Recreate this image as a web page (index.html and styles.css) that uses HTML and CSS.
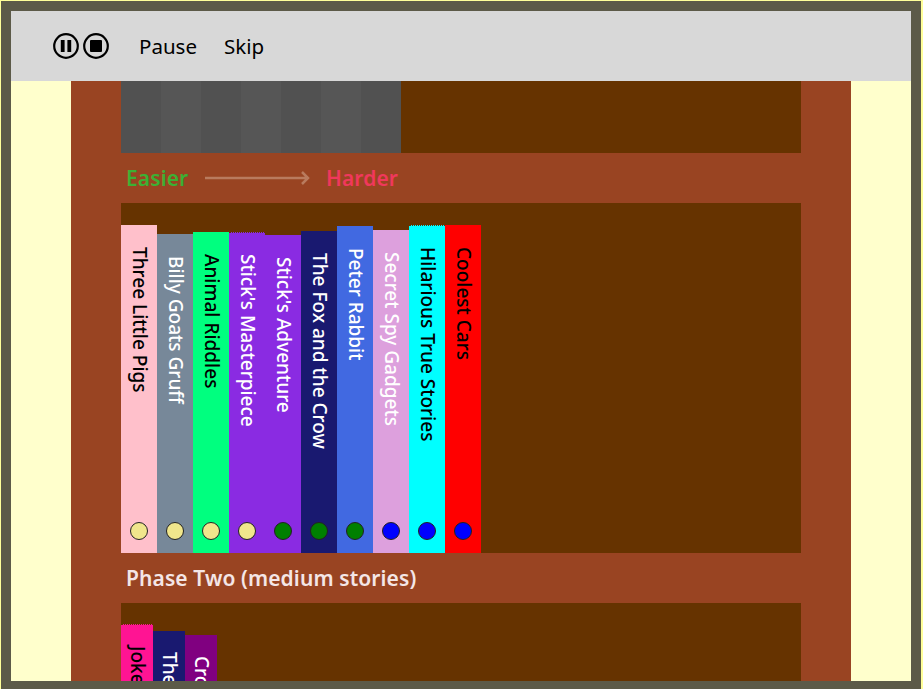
FILE: index.html
```html
<!DOCTYPE html>
<html lang="en">
<head>
<meta charset="utf-8">
<title>Bookshelf</title>
<link rel="stylesheet" href="styles.css">
</head>
<body>
<div class="frame">
  <header class="toolbar">
    <div class="icons">
      <svg class="icon" viewBox="0 0 26 26"><circle cx="13" cy="13" r="11.8" fill="none" stroke="#000" stroke-width="2.2"/><rect x="7.8" y="7" width="3.8" height="12" fill="#000"/><rect x="14.4" y="7" width="3.8" height="12" fill="#000"/></svg>
      <svg class="icon" viewBox="0 0 26 26"><circle cx="13" cy="13" r="11.8" fill="none" stroke="#000" stroke-width="2.2"/><rect x="7" y="7" width="12" height="12" rx="1" fill="#000"/></svg>
    </div>
    <span class="tool">Pause</span>
    <span class="tool">Skip</span>
  </header>
  <main class="case">
    <section class="shelf shelf-top">
      <div class="ghost g1"></div><div class="ghost g2"></div><div class="ghost g1"></div><div class="ghost g2"></div><div class="ghost g1"></div><div class="ghost g2"></div><div class="ghost g1"></div>
    </section>
    <div class="label">
      <span class="easier">Easier</span>
      <svg class="arrow" viewBox="0 0 110 14"><path d="M1 7H104M98 1l6 6-6 6" fill="none" stroke="#b97b5e" stroke-width="2.5"/></svg>
      <span class="harder">Harder</span>
    </div>
    <section class="shelf shelf-main">
      <div class="book pink h328"><span class="title">Three Little Pigs</span><i class="dot easy"></i></div>
      <div class="book slate h319"><span class="title">Billy Goats Gruff</span><i class="dot easy"></i></div>
      <div class="book spring h321"><span class="title">Animal Riddles</span><i class="dot easy"></i></div>
      <div class="book violet h321 nick"><span class="title">Stick's Masterpiece</span><i class="dot easy"></i></div>
      <div class="book violet h318"><span class="title">Stick's Adventure</span><i class="dot mid"></i></div>
      <div class="book navy h322"><span class="title">The Fox and the Crow</span><i class="dot mid"></i></div>
      <div class="book royal h327"><span class="title">Peter Rabbit</span><i class="dot mid"></i></div>
      <div class="book plum h323"><span class="title">Secret Spy Gadgets</span><i class="dot hard"></i></div>
      <div class="book cyan h328 nick"><span class="title">Hilarious True Stories</span><i class="dot hard"></i></div>
      <div class="book red h328"><span class="title">Coolest Cars</span><i class="dot hard"></i></div>
    </section>
    <div class="label"><span class="phase">Phase Two (medium stories)</span></div>
    <section class="shelf shelf-next">
      <div class="book small deep top0 nick"><span class="title">Jokes</span></div>
      <div class="book small navy top7"><span class="title">The</span></div>
      <div class="book small purple top11"><span class="title">Cro</span></div>
    </section>
  </main>
</div>
</body>
</html>
```
FILE: styles.css
```css
* { box-sizing: border-box; }
html, body { margin: 0; height: 100%; background: #ffff99; overflow: hidden; }
body { padding: 1px 2px 0 1px; font-family: "Noto Sans", sans-serif; }
.frame {
  height: 688px;
  border: 10px solid #5c5a48;
  border-bottom-width: 8px;
  background: #ffffcc;
  display: flex;
  flex-direction: column;
  overflow: hidden;
}
.toolbar {
  flex: none;
  height: 70px;
  background: #d8d8d8;
  display: flex;
  align-items: center;
  padding-left: 42px;
  font-size: 20.5px;
  color: #000;
}
.icons { display: flex; gap: 4px; margin-right: 30px; }
.icon { width: 26px; height: 26px; display: block; }
.tool { margin-right: 27px; }
.case {
  flex: 1;
  min-height: 0;
  width: 780px;
  margin-left: 60px;
  padding: 0 50px;
  background: #994422;
  overflow: hidden;
}
.shelf { background: #663300; width: 680px; display: flex; align-items: flex-end; }
.shelf-top { height: 72px; }
.shelf-main { height: 350px; }
.shelf-next { height: 78px; align-items: flex-start; overflow: hidden; }
.ghost { width: 40px; height: 72px; }
.g1 { background: #515151; }
.g2 { background: #565656; }
.label { height: 50px; display: flex; align-items: center; padding-left: 5px; font-size: 21px; font-weight: 600; letter-spacing: 0.1px; }
.easier { color: #3cb034; width: 78px; }
.harder { color: #f0385c; }
.arrow { width: 110px; height: 14px; margin-right: 12px; }
.phase { color: #f4e6e6; }
.book { width: 36px; position: relative; display: flex; justify-content: center; padding: 22px 0 0 1px; flex: none; }
.nick { border-top: 1px dotted #663300; padding-top: 21px; }
.title { writing-mode: vertical-rl; font-size: 19px; font-weight: 500; line-height: 24px; white-space: nowrap; }
.dot { position: absolute; left: 9px; bottom: 13px; width: 18px; height: 18px; border-radius: 50%; border: 1px solid #222; }
.easy { background: #f0e68c; }
.mid { background: #008000; }
.hard { background: #0000ff; }
.pink { background: #ffc0cb; color: #000; }
.slate { background: #778899; color: #fff; }
.spring { background: #00ff7f; color: #000; }
.violet { background: #8a2be2; color: #fff; }
.navy { background: #191970; color: #fff; }
.royal { background: #4169e1; color: #fff; }
.plum { background: #dda0dd; color: #fff; }
.cyan { background: #00ffff; color: #000; }
.red { background: #ff0000; color: #000; }
.deep { background: #ff1493; color: #000; }
.purple { background: #800080; color: #fff; }
.h328 { height: 328px; }
.h327 { height: 327px; }
.h323 { height: 323px; }
.h322 { height: 322px; }
.h321 { height: 321px; }
.h319 { height: 319px; }
.h318 { height: 318px; }
.small { width: 32px; height: 80px; padding-top: 21px; }
.top0 { margin-top: 21px; }
.top7 { margin-top: 28px; }
.top11 { margin-top: 32px; }
```
